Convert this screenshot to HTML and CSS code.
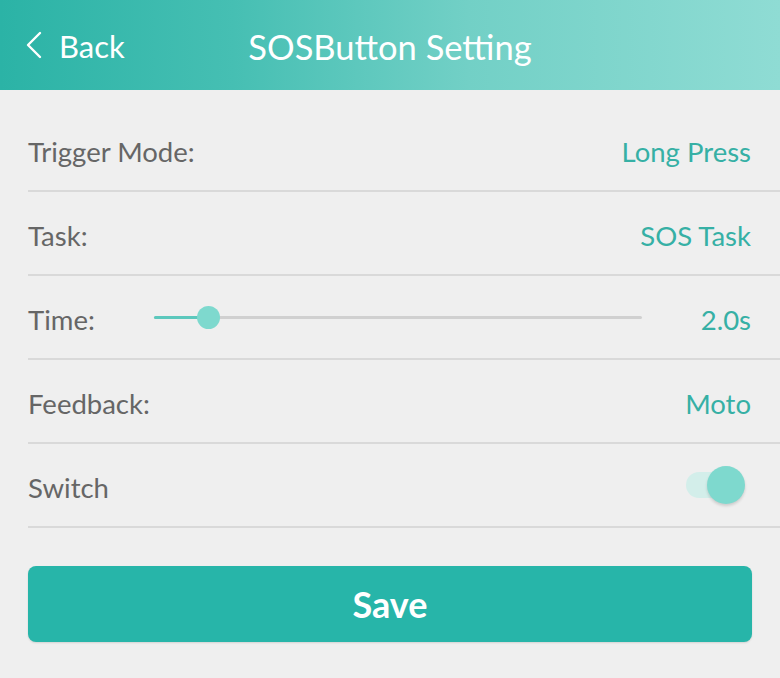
FILE: index.html
```html
<!DOCTYPE html>
<html>
<head>
<meta charset="utf-8">
<link rel="stylesheet" href="styles.css">
</head>
<body>
<header class="topbar">
  <div class="back">
    <svg class="chev" width="18" height="28" viewBox="0 0 18 28"><path d="M15 2 L3 14 L15 26" fill="none" stroke="#ffffff" stroke-width="2.4" stroke-linecap="round" stroke-linejoin="round"/></svg>
    <span>Back</span>
  </div>
  <div class="title">SOSButton Setting</div>
</header>
<main class="list">
  <div class="row"><span class="label">Trigger Mode:</span><span class="value">Long Press</span></div>
  <div class="row"><span class="label">Task:</span><span class="value">SOS Task</span></div>
  <div class="row">
    <span class="label label-time">Time:</span>
    <div class="slider">
      <div class="track"><div class="fill"></div><div class="thumb"></div></div>
    </div>
    <span class="value">2.0s</span>
  </div>
  <div class="row"><span class="label">Feedback:</span><span class="value">Moto</span></div>
  <div class="row"><span class="label">Switch</span>
    <div class="switch"><div class="sw-track"></div><div class="sw-thumb"></div></div>
  </div>
  <div class="actions"><button class="save">Save</button></div>
</main>
</body>
</html>
```
FILE: styles.css
```css
* { box-sizing: border-box; }
html, body { margin: 0; padding: 0; }
body {
  width: 780px;
  height: 678px;
  background: #efefef;
  font-family: Lato, "Open Sans", sans-serif;
  overflow: hidden;
}
.topbar {
  position: relative;
  height: 90px;
  background: linear-gradient(90deg, #2bb3a6 0%, #46bfb3 30%, #72d0c6 60%, #8fdcd4 100%);
  display: flex;
  align-items: center;
  color: #ffffff;
}
.back {
  display: flex;
  align-items: center;
  padding-left: 25px;
  padding-top: 2px;
  font-size: 31px;
  gap: 16px;
}
.chev { display: block; margin-top: -2px; }
.title {
  position: absolute;
  left: 0;
  right: 0;
  top: 0;
  height: 90px;
  display: flex;
  align-items: center;
  justify-content: center;
  font-size: 34.5px;
  padding-top: 2px;
  pointer-events: none;
}
.list {
  padding: 18px 0 0 28px;
}
.row {
  height: 84px;
  border-bottom: 2px solid #d9d9d9;
  display: flex;
  align-items: center;
  padding-right: 29px;
  padding-top: 4px;
  font-size: 27.5px;
}
.label { color: #666666; }
.label-time { width: 126px; flex: 0 0 126px; }
.value { color: #36b0a5; margin-left: auto; }
.slider {
  flex: 0 0 488px;
  margin-top: -4px;
}
.track {
  position: relative;
  height: 3px;
  background: #d0d0d0;
  border-radius: 2px;
}
.fill {
  width: 54px;
  height: 3px;
  background: #5cc8bd;
  border-radius: 2px;
}
.thumb {
  position: absolute;
  left: 43px;
  top: -10px;
  width: 23px;
  height: 23px;
  border-radius: 50%;
  background: #7ed9ce;
}
.switch {
  position: relative;
  margin-left: auto;
  width: 59px;
  height: 38px;
  margin-right: 6px;
  margin-top: -4px;
}
.sw-track {
  position: absolute;
  left: 0;
  top: 6px;
  width: 50px;
  height: 26px;
  border-radius: 13px;
  background: #d3eeea;
}
.sw-thumb {
  position: absolute;
  left: 21px;
  top: 0;
  width: 38px;
  height: 38px;
  border-radius: 50%;
  background: #7ed9ce;
  box-shadow: 0 2px 3px rgba(0,0,0,0.15);
}
.actions {
  padding: 38px 28px 0 0;
}
.save {
  display: block;
  width: 100%;
  height: 76px;
  border: none;
  border-radius: 8px;
  background: #27b5a9;
  color: #ffffff;
  font-family: Lato, "Open Sans", sans-serif;
  font-weight: 700;
  font-size: 36px;
  box-shadow: 0 1px 2px rgba(0,0,0,0.12);
}
```
